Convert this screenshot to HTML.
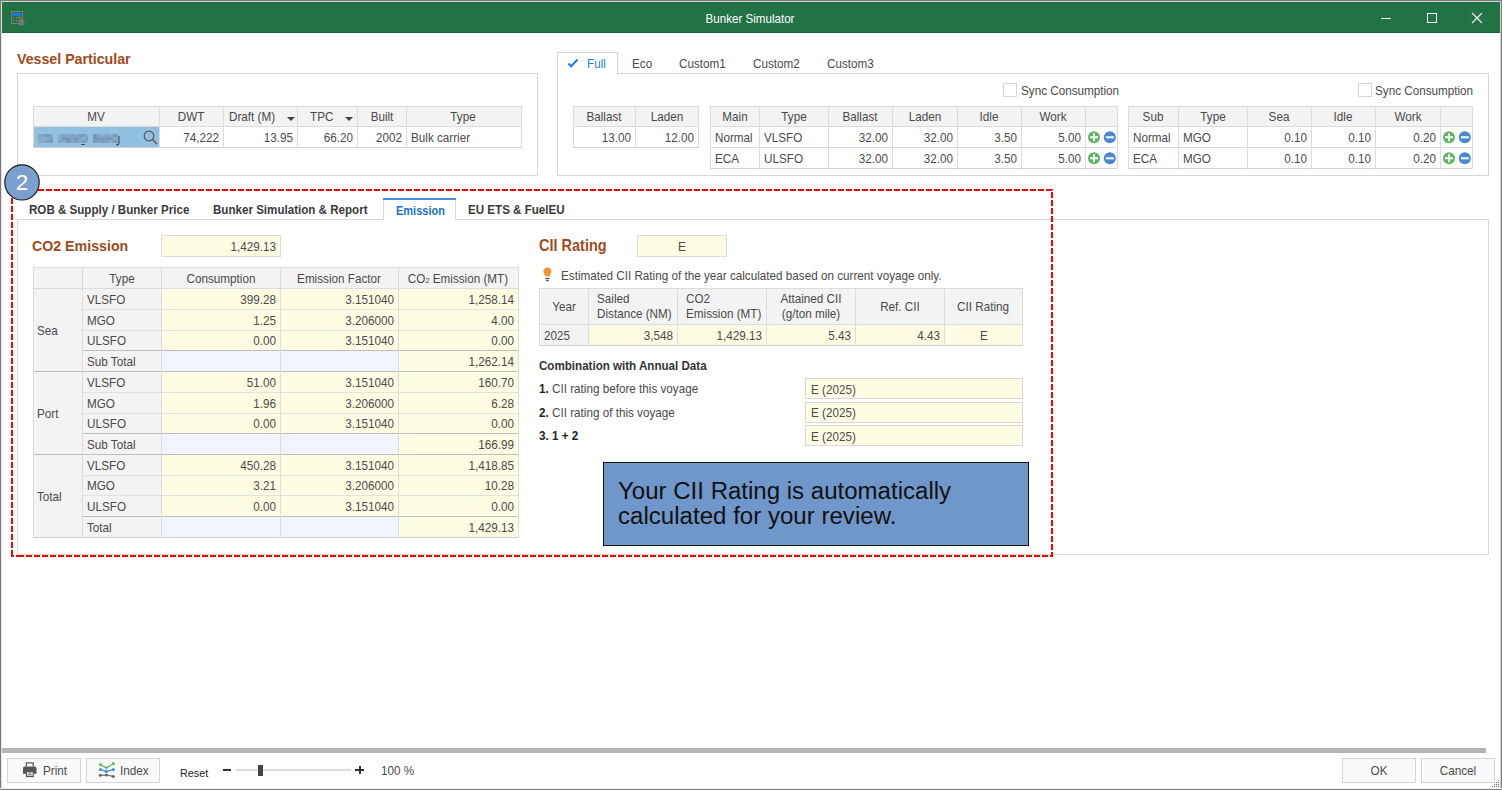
<!DOCTYPE html><html><head><meta charset="utf-8"><style>
html,body{margin:0;padding:0;}
body{width:1502px;height:790px;position:relative;overflow:hidden;background:#fff;font-family:"Liberation Sans",sans-serif;}
.r{position:absolute;box-sizing:content-box;}
.t{position:absolute;white-space:nowrap;line-height:normal;}
svg{position:absolute;}
</style></head><body>
<div class="r" style="left:0px;top:0px;width:1502px;height:790px;background:#fff;"></div>
<div class="r" style="left:0px;top:0px;width:1502px;height:1px;background:#7a7a7a;"></div>
<div class="r" style="left:0px;top:1px;width:1502px;height:1px;background:#d4d4d4;"></div>
<div class="r" style="left:0px;top:0px;width:1px;height:790px;background:#7a7a7a;"></div>
<div class="r" style="left:1px;top:1px;width:1px;height:788px;background:#e2e2e2;"></div>
<div class="r" style="left:1500px;top:1px;width:1px;height:788px;background:#d4d4d4;"></div>
<div class="r" style="left:1501px;top:0px;width:1px;height:790px;background:#7a7a7a;"></div>
<div class="r" style="left:0px;top:788px;width:1502px;height:1px;background:#f4f4f4;"></div>
<div class="r" style="left:0px;top:789px;width:1502px;height:1px;background:#7a7a7a;"></div>
<div class="r" style="left:2px;top:2px;width:1498px;height:31px;background:#217346;"></div>
<div class="r" style="left:2px;top:32px;width:1498px;height:1px;background:#176638;"></div>
<div class="t" style="top:11.76px;font-size:12.53px;color:#ffffff;left:450px;width:600px;text-align:center;transform-origin:50% 0;transform:scaleX(0.9259);">Bunker Simulator</div>
<svg style="left:8px;top:8px" width="20" height="20" viewBox="8 8 20 20">
<rect x="11.5" y="11.5" width="11" height="12" fill="none" stroke="#7a7a7a" stroke-width="1"/>
<rect x="13" y="13" width="8" height="3" fill="#1479ee"/>
<circle cx="13.8" cy="17.7" r="0.8" fill="#8a7a8a"/><circle cx="16.7" cy="17.7" r="0.8" fill="#8a7a8a"/><circle cx="19.5" cy="17.5" r="0.8" fill="#f0b020"/>
<circle cx="13.8" cy="20.6" r="0.8" fill="#8a7a8a"/><circle cx="16.7" cy="20.6" r="0.8" fill="#8a7a8a"/>
<path d="M21.3 17.8 C20.5 19 18 20.3 18 22.3 A3.3 3.3 0 0 0 24.6 22.3 C24.6 20.3 22.1 19 21.3 17.8Z" fill="#747474"/>
</svg>
<div class="r" style="left:1381px;top:18px;width:10px;height:1px;background:#fff;"></div>
<div class="r" style="left:1427px;top:13px;width:10px;height:10px;border:1px solid #fff;width:8px;height:8px;"></div>
<svg style="left:1471px;top:12px" width="12" height="12" viewBox="0 0 12 12"><path d="M1 1L11 11M11 1L1 11" stroke="#fff" stroke-width="1.1"/></svg>
<div class="t" style="top:50.02px;font-size:15.34px;font-weight:700;color:#a04b1d;left:17px;transform-origin:0 0;transform:scaleX(0.9259);">Vessel Particular</div>
<div class="r" style="left:17px;top:73px;width:521px;height:103px;border:1px solid #d6d6d6;width:519px;height:101px;"></div>
<div class="r" style="left:33px;top:106px;width:489px;height:21px;background:#f3f3f3;"></div>
<div class="r" style="left:34px;top:127px;width:125px;height:21px;background:#92c0e1;"></div>
<div class="r" style="left:33px;top:106px;width:489px;height:1px;background:#dcdcdc;"></div>
<div class="r" style="left:33px;top:126px;width:489px;height:1px;background:#dcdcdc;"></div>
<div class="r" style="left:33px;top:147px;width:489px;height:1px;background:#cfcfcf;"></div>
<div class="r" style="left:33px;top:106px;width:1px;height:42px;background:#dcdcdc;"></div>
<div class="r" style="left:159px;top:106px;width:1px;height:42px;background:#dcdcdc;"></div>
<div class="r" style="left:223px;top:106px;width:1px;height:42px;background:#dcdcdc;"></div>
<div class="r" style="left:297px;top:106px;width:1px;height:42px;background:#dcdcdc;"></div>
<div class="r" style="left:357px;top:106px;width:1px;height:42px;background:#dcdcdc;"></div>
<div class="r" style="left:406px;top:106px;width:1px;height:42px;background:#dcdcdc;"></div>
<div class="r" style="left:521px;top:106px;width:1px;height:42px;background:#dcdcdc;"></div>
<div class="t" style="top:109.96px;font-size:12.64px;color:#4a4a4a;left:-204px;width:600px;text-align:center;transform-origin:50% 0;transform:scaleX(0.9259);">MV</div>
<div class="t" style="top:109.96px;font-size:12.64px;color:#4a4a4a;left:-109px;width:600px;text-align:center;transform-origin:50% 0;transform:scaleX(0.9259);">DWT</div>
<div class="t" style="top:109.96px;font-size:12.64px;color:#4a4a4a;left:229px;transform-origin:0 0;transform:scaleX(0.9259);">Draft (M)</div>
<div class="t" style="top:109.96px;font-size:12.64px;color:#4a4a4a;left:310px;transform-origin:0 0;transform:scaleX(0.9259);">TPC</div>
<div class="t" style="top:109.96px;font-size:12.64px;color:#4a4a4a;left:82px;width:600px;text-align:center;transform-origin:50% 0;transform:scaleX(0.9259);">Built</div>
<div class="t" style="top:109.96px;font-size:12.64px;color:#4a4a4a;left:163px;width:600px;text-align:center;transform-origin:50% 0;transform:scaleX(0.9259);">Type</div>
<svg style="left:287px;top:117px" width="8" height="4" viewBox="0 0 8 4"><path d="M0 0H8L4 4Z" fill="#444"/></svg>
<svg style="left:345px;top:117px" width="8" height="4" viewBox="0 0 8 4"><path d="M0 0H8L4 4Z" fill="#444"/></svg>
<div class="t" style="top:130.96px;font-size:12.64px;color:#4a4a4a;left:-181px;width:400px;text-align:right;transform-origin:100% 0;transform:scaleX(0.9259);">74,222</div>
<div class="t" style="top:130.96px;font-size:12.64px;color:#4a4a4a;left:-107px;width:400px;text-align:right;transform-origin:100% 0;transform:scaleX(0.9259);">13.95</div>
<div class="t" style="top:130.96px;font-size:12.64px;color:#4a4a4a;left:-47px;width:400px;text-align:right;transform-origin:100% 0;transform:scaleX(0.9259);">66.20</div>
<div class="t" style="top:130.96px;font-size:12.64px;color:#4a4a4a;left:2px;width:400px;text-align:right;transform-origin:100% 0;transform:scaleX(0.9259);">2002</div>
<div class="t" style="top:130.96px;font-size:12.64px;color:#4a4a4a;left:411px;transform-origin:0 0;transform:scaleX(0.9259);">Bulk carrier</div>
<div class="r" style="left:38px;top:134px;width:15px;height:9px;background:#84a8c6;"></div>
<div class="r" style="left:38px;top:134px;width:4px;height:3px;background:#80a4c3;"></div>
<div class="r" style="left:38px;top:137px;width:4px;height:3px;background:#86aac8;"></div>
<div class="r" style="left:38px;top:140px;width:4px;height:3px;background:#86aac8;"></div>
<div class="r" style="left:42px;top:134px;width:4px;height:3px;background:#80a4c3;"></div>
<div class="r" style="left:42px;top:137px;width:4px;height:3px;background:#8aaecb;"></div>
<div class="r" style="left:42px;top:140px;width:4px;height:3px;background:#86aac8;"></div>
<div class="r" style="left:46px;top:134px;width:4px;height:3px;background:#769bba;"></div>
<div class="r" style="left:46px;top:137px;width:4px;height:3px;background:#86aac8;"></div>
<div class="r" style="left:46px;top:140px;width:4px;height:3px;background:#7a9fbe;"></div>
<div class="r" style="left:50px;top:134px;width:3px;height:3px;background:#86aac8;"></div>
<div class="r" style="left:50px;top:137px;width:3px;height:3px;background:#7a9fbe;"></div>
<div class="r" style="left:50px;top:140px;width:3px;height:3px;background:#769bba;"></div>
<div class="r" style="left:58px;top:134px;width:30px;height:9px;background:#84a8c6;"></div>
<div class="r" style="left:58px;top:134px;width:4px;height:3px;background:#8aaecb;"></div>
<div class="r" style="left:58px;top:137px;width:4px;height:3px;background:#86aac8;"></div>
<div class="r" style="left:58px;top:140px;width:4px;height:3px;background:#80a4c3;"></div>
<div class="r" style="left:62px;top:134px;width:4px;height:3px;background:#80a4c3;"></div>
<div class="r" style="left:62px;top:137px;width:4px;height:3px;background:#769bba;"></div>
<div class="r" style="left:62px;top:140px;width:4px;height:3px;background:#86aac8;"></div>
<div class="r" style="left:66px;top:134px;width:4px;height:3px;background:#86aac8;"></div>
<div class="r" style="left:66px;top:137px;width:4px;height:3px;background:#769bba;"></div>
<div class="r" style="left:66px;top:140px;width:4px;height:3px;background:#769bba;"></div>
<div class="r" style="left:70px;top:134px;width:4px;height:3px;background:#80a4c3;"></div>
<div class="r" style="left:70px;top:137px;width:4px;height:3px;background:#80a4c3;"></div>
<div class="r" style="left:70px;top:140px;width:4px;height:3px;background:#80a4c3;"></div>
<div class="r" style="left:74px;top:134px;width:4px;height:3px;background:#86aac8;"></div>
<div class="r" style="left:74px;top:137px;width:4px;height:3px;background:#769bba;"></div>
<div class="r" style="left:74px;top:140px;width:4px;height:3px;background:#7a9fbe;"></div>
<div class="r" style="left:78px;top:134px;width:4px;height:3px;background:#7a9fbe;"></div>
<div class="r" style="left:78px;top:137px;width:4px;height:3px;background:#80a4c3;"></div>
<div class="r" style="left:78px;top:140px;width:4px;height:3px;background:#86aac8;"></div>
<div class="r" style="left:82px;top:134px;width:4px;height:3px;background:#7a9fbe;"></div>
<div class="r" style="left:82px;top:137px;width:4px;height:3px;background:#8aaecb;"></div>
<div class="r" style="left:82px;top:140px;width:4px;height:3px;background:#7a9fbe;"></div>
<div class="r" style="left:86px;top:134px;width:2px;height:3px;background:#8aaecb;"></div>
<div class="r" style="left:86px;top:137px;width:2px;height:3px;background:#769bba;"></div>
<div class="r" style="left:86px;top:140px;width:2px;height:3px;background:#86aac8;"></div>
<div class="r" style="left:93px;top:134px;width:26px;height:9px;background:#84a8c6;"></div>
<div class="r" style="left:93px;top:134px;width:4px;height:3px;background:#769bba;"></div>
<div class="r" style="left:93px;top:137px;width:4px;height:3px;background:#769bba;"></div>
<div class="r" style="left:93px;top:140px;width:4px;height:3px;background:#769bba;"></div>
<div class="r" style="left:97px;top:134px;width:4px;height:3px;background:#86aac8;"></div>
<div class="r" style="left:97px;top:137px;width:4px;height:3px;background:#769bba;"></div>
<div class="r" style="left:97px;top:140px;width:4px;height:3px;background:#80a4c3;"></div>
<div class="r" style="left:101px;top:134px;width:4px;height:3px;background:#8aaecb;"></div>
<div class="r" style="left:101px;top:137px;width:4px;height:3px;background:#7a9fbe;"></div>
<div class="r" style="left:101px;top:140px;width:4px;height:3px;background:#7a9fbe;"></div>
<div class="r" style="left:105px;top:134px;width:4px;height:3px;background:#80a4c3;"></div>
<div class="r" style="left:105px;top:137px;width:4px;height:3px;background:#769bba;"></div>
<div class="r" style="left:105px;top:140px;width:4px;height:3px;background:#80a4c3;"></div>
<div class="r" style="left:109px;top:134px;width:4px;height:3px;background:#8aaecb;"></div>
<div class="r" style="left:109px;top:137px;width:4px;height:3px;background:#769bba;"></div>
<div class="r" style="left:109px;top:140px;width:4px;height:3px;background:#8aaecb;"></div>
<div class="r" style="left:113px;top:134px;width:4px;height:3px;background:#769bba;"></div>
<div class="r" style="left:113px;top:137px;width:4px;height:3px;background:#86aac8;"></div>
<div class="r" style="left:113px;top:140px;width:4px;height:3px;background:#769bba;"></div>
<div class="r" style="left:117px;top:134px;width:2px;height:3px;background:#86aac8;"></div>
<div class="r" style="left:117px;top:137px;width:2px;height:3px;background:#8aaecb;"></div>
<div class="r" style="left:117px;top:140px;width:2px;height:3px;background:#86aac8;"></div>
<div class="r" style="left:81px;top:144px;width:4px;height:1px;background:#3d5060;"></div>
<svg style="left:114px;top:135px" width="8" height="12" viewBox="0 0 8 12"><path d="M5 1V8Q5 10 2 10" fill="none" stroke="#3d4e5c" stroke-width="1.1"/></svg>
<svg style="left:143px;top:130px" width="15" height="15" viewBox="0 0 15 15"><circle cx="6" cy="6" r="4.8" fill="none" stroke="#555" stroke-width="1.2"/><path d="M9.5 9.5L14 14" stroke="#555" stroke-width="1.3"/></svg>
<div class="r" style="left:557px;top:73px;width:932px;height:103px;border:1px solid #d6d6d6;width:930px;height:101px;"></div>
<div class="r" style="left:557px;top:52px;width:61px;height:23px;border:1px solid #d6d6d6;width:59px;height:21px;border-bottom:none;height:22px;background:#fff;"></div>
<svg style="left:567px;top:58px" width="12" height="10" viewBox="0 0 12 10"><path d="M1.5 5.5L4.2 8.2L10.5 1.5" fill="none" stroke="#1e7ad6" stroke-width="2"/></svg>
<div class="t" style="top:57.16px;font-size:12.64px;color:#2a7fd4;left:587px;transform-origin:0 0;transform:scaleX(0.9259);">Full</div>
<div class="t" style="top:57.16px;font-size:12.64px;color:#4a4a4a;left:632px;transform-origin:0 0;transform:scaleX(0.9259);">Eco</div>
<div class="t" style="top:57.16px;font-size:12.64px;color:#4a4a4a;left:679px;transform-origin:0 0;transform:scaleX(0.9259);">Custom1</div>
<div class="t" style="top:57.16px;font-size:12.64px;color:#4a4a4a;left:753px;transform-origin:0 0;transform:scaleX(0.9259);">Custom2</div>
<div class="t" style="top:57.16px;font-size:12.64px;color:#4a4a4a;left:827px;transform-origin:0 0;transform:scaleX(0.9259);">Custom3</div>
<div class="r" style="left:1003px;top:83px;width:14px;height:14px;border:1px solid #d6d6d6;width:12px;height:12px;"></div>
<div class="t" style="top:83.96px;font-size:12.64px;color:#4a4a4a;left:1021px;transform-origin:0 0;transform:scaleX(0.9259);">Sync Consumption</div>
<div class="r" style="left:1358px;top:83px;width:14px;height:14px;border:1px solid #d6d6d6;width:12px;height:12px;"></div>
<div class="t" style="top:83.96px;font-size:12.64px;color:#4a4a4a;left:1375px;transform-origin:0 0;transform:scaleX(0.9259);">Sync Consumption</div>
<div class="r" style="left:573px;top:106px;width:126px;height:21px;background:#f3f3f3;"></div>
<div class="r" style="left:573px;top:106px;width:126px;height:1px;background:#dcdcdc;"></div>
<div class="r" style="left:573px;top:126px;width:126px;height:1px;background:#dcdcdc;"></div>
<div class="r" style="left:573px;top:147px;width:126px;height:1px;background:#cfcfcf;"></div>
<div class="r" style="left:573px;top:106px;width:1px;height:42px;background:#dcdcdc;"></div>
<div class="r" style="left:635px;top:106px;width:1px;height:42px;background:#dcdcdc;"></div>
<div class="r" style="left:698px;top:106px;width:1px;height:42px;background:#dcdcdc;"></div>
<div class="t" style="top:109.96px;font-size:12.64px;color:#4a4a4a;left:304px;width:600px;text-align:center;transform-origin:50% 0;transform:scaleX(0.9259);">Ballast</div>
<div class="t" style="top:109.96px;font-size:12.64px;color:#4a4a4a;left:367px;width:600px;text-align:center;transform-origin:50% 0;transform:scaleX(0.9259);">Laden</div>
<div class="t" style="top:130.96px;font-size:12.64px;color:#4a4a4a;left:231px;width:400px;text-align:right;transform-origin:100% 0;transform:scaleX(0.9259);">13.00</div>
<div class="t" style="top:130.96px;font-size:12.64px;color:#4a4a4a;left:294px;width:400px;text-align:right;transform-origin:100% 0;transform:scaleX(0.9259);">12.00</div>
<div class="r" style="left:710px;top:106px;width:408px;height:21px;background:#f3f3f3;"></div>
<div class="r" style="left:710px;top:106px;width:408px;height:1px;background:#dcdcdc;"></div>
<div class="r" style="left:710px;top:126px;width:408px;height:1px;background:#dcdcdc;"></div>
<div class="r" style="left:710px;top:147px;width:408px;height:1px;background:#dcdcdc;"></div>
<div class="r" style="left:710px;top:168px;width:408px;height:1px;background:#cfcfcf;"></div>
<div class="r" style="left:710px;top:106px;width:1px;height:63px;background:#dcdcdc;"></div>
<div class="r" style="left:759px;top:106px;width:1px;height:63px;background:#dcdcdc;"></div>
<div class="r" style="left:828px;top:106px;width:1px;height:63px;background:#dcdcdc;"></div>
<div class="r" style="left:892px;top:106px;width:1px;height:63px;background:#dcdcdc;"></div>
<div class="r" style="left:957px;top:106px;width:1px;height:63px;background:#dcdcdc;"></div>
<div class="r" style="left:1021px;top:106px;width:1px;height:63px;background:#dcdcdc;"></div>
<div class="r" style="left:1085px;top:106px;width:1px;height:63px;background:#dcdcdc;"></div>
<div class="r" style="left:1117px;top:106px;width:1px;height:63px;background:#dcdcdc;"></div>
<div class="t" style="top:109.96px;font-size:12.64px;color:#4a4a4a;left:434.5px;width:600px;text-align:center;transform-origin:50% 0;transform:scaleX(0.9259);">Main</div>
<div class="t" style="top:109.96px;font-size:12.64px;color:#4a4a4a;left:493.5px;width:600px;text-align:center;transform-origin:50% 0;transform:scaleX(0.9259);">Type</div>
<div class="t" style="top:109.96px;font-size:12.64px;color:#4a4a4a;left:560.0px;width:600px;text-align:center;transform-origin:50% 0;transform:scaleX(0.9259);">Ballast</div>
<div class="t" style="top:109.96px;font-size:12.64px;color:#4a4a4a;left:624.5px;width:600px;text-align:center;transform-origin:50% 0;transform:scaleX(0.9259);">Laden</div>
<div class="t" style="top:109.96px;font-size:12.64px;color:#4a4a4a;left:689.0px;width:600px;text-align:center;transform-origin:50% 0;transform:scaleX(0.9259);">Idle</div>
<div class="t" style="top:109.96px;font-size:12.64px;color:#4a4a4a;left:753.0px;width:600px;text-align:center;transform-origin:50% 0;transform:scaleX(0.9259);">Work</div>
<div class="t" style="top:130.96px;font-size:12.64px;color:#4a4a4a;left:715px;transform-origin:0 0;transform:scaleX(0.9259);">Normal</div>
<div class="t" style="top:130.96px;font-size:12.64px;color:#4a4a4a;left:764px;transform-origin:0 0;transform:scaleX(0.9259);">VLSFO</div>
<div class="t" style="top:130.96px;font-size:12.64px;color:#4a4a4a;left:488px;width:400px;text-align:right;transform-origin:100% 0;transform:scaleX(0.9259);">32.00</div>
<div class="t" style="top:130.96px;font-size:12.64px;color:#4a4a4a;left:553px;width:400px;text-align:right;transform-origin:100% 0;transform:scaleX(0.9259);">32.00</div>
<div class="t" style="top:130.96px;font-size:12.64px;color:#4a4a4a;left:617px;width:400px;text-align:right;transform-origin:100% 0;transform:scaleX(0.9259);">3.50</div>
<div class="t" style="top:130.96px;font-size:12.64px;color:#4a4a4a;left:681px;width:400px;text-align:right;transform-origin:100% 0;transform:scaleX(0.9259);">5.00</div>
<svg style="left:1088px;top:131px" width="30" height="13" viewBox="0 0 30 13">
<circle cx="6" cy="6.3" r="6" fill="#5cb860"/><path d="M6 2.3V10.3M2 6.3H10" stroke="#fff" stroke-width="2"/>
<circle cx="21.8" cy="6.3" r="6" fill="#4a88cf"/><path d="M17.8 6.3H25.8" stroke="#fff" stroke-width="2"/></svg>
<div class="t" style="top:151.96px;font-size:12.64px;color:#4a4a4a;left:715px;transform-origin:0 0;transform:scaleX(0.9259);">ECA</div>
<div class="t" style="top:151.96px;font-size:12.64px;color:#4a4a4a;left:764px;transform-origin:0 0;transform:scaleX(0.9259);">ULSFO</div>
<div class="t" style="top:151.96px;font-size:12.64px;color:#4a4a4a;left:488px;width:400px;text-align:right;transform-origin:100% 0;transform:scaleX(0.9259);">32.00</div>
<div class="t" style="top:151.96px;font-size:12.64px;color:#4a4a4a;left:553px;width:400px;text-align:right;transform-origin:100% 0;transform:scaleX(0.9259);">32.00</div>
<div class="t" style="top:151.96px;font-size:12.64px;color:#4a4a4a;left:617px;width:400px;text-align:right;transform-origin:100% 0;transform:scaleX(0.9259);">3.50</div>
<div class="t" style="top:151.96px;font-size:12.64px;color:#4a4a4a;left:681px;width:400px;text-align:right;transform-origin:100% 0;transform:scaleX(0.9259);">5.00</div>
<svg style="left:1088px;top:152px" width="30" height="13" viewBox="0 0 30 13">
<circle cx="6" cy="6.3" r="6" fill="#5cb860"/><path d="M6 2.3V10.3M2 6.3H10" stroke="#fff" stroke-width="2"/>
<circle cx="21.8" cy="6.3" r="6" fill="#4a88cf"/><path d="M17.8 6.3H25.8" stroke="#fff" stroke-width="2"/></svg>
<div class="r" style="left:1128px;top:106px;width:345px;height:21px;background:#f3f3f3;"></div>
<div class="r" style="left:1128px;top:106px;width:345px;height:1px;background:#dcdcdc;"></div>
<div class="r" style="left:1128px;top:126px;width:345px;height:1px;background:#dcdcdc;"></div>
<div class="r" style="left:1128px;top:147px;width:345px;height:1px;background:#dcdcdc;"></div>
<div class="r" style="left:1128px;top:168px;width:345px;height:1px;background:#cfcfcf;"></div>
<div class="r" style="left:1128px;top:106px;width:1px;height:63px;background:#dcdcdc;"></div>
<div class="r" style="left:1178px;top:106px;width:1px;height:63px;background:#dcdcdc;"></div>
<div class="r" style="left:1247px;top:106px;width:1px;height:63px;background:#dcdcdc;"></div>
<div class="r" style="left:1311px;top:106px;width:1px;height:63px;background:#dcdcdc;"></div>
<div class="r" style="left:1375px;top:106px;width:1px;height:63px;background:#dcdcdc;"></div>
<div class="r" style="left:1440px;top:106px;width:1px;height:63px;background:#dcdcdc;"></div>
<div class="r" style="left:1472px;top:106px;width:1px;height:63px;background:#dcdcdc;"></div>
<div class="t" style="top:109.96px;font-size:12.64px;color:#4a4a4a;left:853.0px;width:600px;text-align:center;transform-origin:50% 0;transform:scaleX(0.9259);">Sub</div>
<div class="t" style="top:109.96px;font-size:12.64px;color:#4a4a4a;left:912.5px;width:600px;text-align:center;transform-origin:50% 0;transform:scaleX(0.9259);">Type</div>
<div class="t" style="top:109.96px;font-size:12.64px;color:#4a4a4a;left:979.0px;width:600px;text-align:center;transform-origin:50% 0;transform:scaleX(0.9259);">Sea</div>
<div class="t" style="top:109.96px;font-size:12.64px;color:#4a4a4a;left:1043.0px;width:600px;text-align:center;transform-origin:50% 0;transform:scaleX(0.9259);">Idle</div>
<div class="t" style="top:109.96px;font-size:12.64px;color:#4a4a4a;left:1107.5px;width:600px;text-align:center;transform-origin:50% 0;transform:scaleX(0.9259);">Work</div>
<div class="t" style="top:130.96px;font-size:12.64px;color:#4a4a4a;left:1133px;transform-origin:0 0;transform:scaleX(0.9259);">Normal</div>
<div class="t" style="top:130.96px;font-size:12.64px;color:#4a4a4a;left:1183px;transform-origin:0 0;transform:scaleX(0.9259);">MGO</div>
<div class="t" style="top:130.96px;font-size:12.64px;color:#4a4a4a;left:907px;width:400px;text-align:right;transform-origin:100% 0;transform:scaleX(0.9259);">0.10</div>
<div class="t" style="top:130.96px;font-size:12.64px;color:#4a4a4a;left:971px;width:400px;text-align:right;transform-origin:100% 0;transform:scaleX(0.9259);">0.10</div>
<div class="t" style="top:130.96px;font-size:12.64px;color:#4a4a4a;left:1036px;width:400px;text-align:right;transform-origin:100% 0;transform:scaleX(0.9259);">0.20</div>
<svg style="left:1443px;top:131px" width="30" height="13" viewBox="0 0 30 13">
<circle cx="6" cy="6.3" r="6" fill="#5cb860"/><path d="M6 2.3V10.3M2 6.3H10" stroke="#fff" stroke-width="2"/>
<circle cx="21.8" cy="6.3" r="6" fill="#4a88cf"/><path d="M17.8 6.3H25.8" stroke="#fff" stroke-width="2"/></svg>
<div class="t" style="top:151.96px;font-size:12.64px;color:#4a4a4a;left:1133px;transform-origin:0 0;transform:scaleX(0.9259);">ECA</div>
<div class="t" style="top:151.96px;font-size:12.64px;color:#4a4a4a;left:1183px;transform-origin:0 0;transform:scaleX(0.9259);">MGO</div>
<div class="t" style="top:151.96px;font-size:12.64px;color:#4a4a4a;left:907px;width:400px;text-align:right;transform-origin:100% 0;transform:scaleX(0.9259);">0.10</div>
<div class="t" style="top:151.96px;font-size:12.64px;color:#4a4a4a;left:971px;width:400px;text-align:right;transform-origin:100% 0;transform:scaleX(0.9259);">0.10</div>
<div class="t" style="top:151.96px;font-size:12.64px;color:#4a4a4a;left:1036px;width:400px;text-align:right;transform-origin:100% 0;transform:scaleX(0.9259);">0.20</div>
<svg style="left:1443px;top:152px" width="30" height="13" viewBox="0 0 30 13">
<circle cx="6" cy="6.3" r="6" fill="#5cb860"/><path d="M6 2.3V10.3M2 6.3H10" stroke="#fff" stroke-width="2"/>
<circle cx="21.8" cy="6.3" r="6" fill="#4a88cf"/><path d="M17.8 6.3H25.8" stroke="#fff" stroke-width="2"/></svg>
<div class="r" style="left:17px;top:219px;width:1472px;height:336px;border:1px solid #d9d9d9;width:1470px;height:334px;"></div>
<div class="t" style="top:203.06px;font-size:12.53px;font-weight:700;color:#3a3a3a;left:29px;transform-origin:0 0;transform:scaleX(0.9259);">ROB &amp; Supply / Bunker Price</div>
<div class="t" style="top:203.06px;font-size:12.53px;font-weight:700;color:#3a3a3a;left:213px;transform-origin:0 0;transform:scaleX(0.9259);">Bunker Simulation &amp; Report</div>
<div class="r" style="left:383px;top:198px;width:73px;height:22px;background:#fff;border-left:1px solid #d9d9d9;border-right:1px solid #d9d9d9;width:71px;"></div>
<div class="r" style="left:383px;top:198px;width:73px;height:2px;background:#4d8ae6;"></div>
<div class="t" style="top:203.65px;font-size:11.88px;font-weight:700;color:#1a72c6;left:396px;transform-origin:0 0;transform:scaleX(0.9259);">Emission</div>
<div class="t" style="top:203.06px;font-size:12.53px;font-weight:700;color:#3a3a3a;left:467.5px;transform-origin:0 0;transform:scaleX(0.9259);">EU ETS &amp; FuelEU</div>
<div class="t" style="top:236.72px;font-size:15.34px;font-weight:700;color:#a04b1d;left:32px;transform-origin:0 0;transform:scaleX(0.9259);">CO2 Emission</div>
<div class="r" style="left:161px;top:235px;width:120px;height:22px;background:#fefde4;border:1px solid #dcdcdc;width:118px;height:20px;"></div>
<div class="t" style="top:239.96px;font-size:12.64px;color:#4a4a4a;left:-124px;width:400px;text-align:right;transform-origin:100% 0;transform:scaleX(0.9259);">1,429.13</div>
<div class="r" style="left:33px;top:267px;width:485px;height:21px;background:#f3f3f3;"></div>
<div class="r" style="left:33px;top:288px;width:128px;height:249px;background:#f3f3f3;"></div>
<div class="r" style="left:161px;top:288px;width:357px;height:62px;background:#fefde4;"></div>
<div class="r" style="left:161px;top:350px;width:237px;height:21px;background:#f1f4fd;"></div>
<div class="r" style="left:398px;top:350px;width:120px;height:21px;background:#fefde4;"></div>
<div class="r" style="left:161px;top:371px;width:357px;height:62px;background:#fefde4;"></div>
<div class="r" style="left:161px;top:433px;width:237px;height:21px;background:#f1f4fd;"></div>
<div class="r" style="left:398px;top:433px;width:120px;height:21px;background:#fefde4;"></div>
<div class="r" style="left:161px;top:454px;width:357px;height:62px;background:#fefde4;"></div>
<div class="r" style="left:161px;top:516px;width:237px;height:21px;background:#f1f4fd;"></div>
<div class="r" style="left:398px;top:516px;width:120px;height:21px;background:#fefde4;"></div>
<div class="r" style="left:33px;top:267px;width:486px;height:1px;background:#dcdcdc;"></div>
<div class="r" style="left:33px;top:288px;width:486px;height:1px;background:#dcdcdc;"></div>
<div class="r" style="left:82px;top:309px;width:437px;height:1px;background:#e2e2e2;"></div>
<div class="r" style="left:82px;top:330px;width:437px;height:1px;background:#e2e2e2;"></div>
<div class="r" style="left:82px;top:350px;width:437px;height:1px;background:#bdbdbd;"></div>
<div class="r" style="left:33px;top:371px;width:486px;height:1px;background:#bdbdbd;"></div>
<div class="r" style="left:82px;top:392px;width:437px;height:1px;background:#e2e2e2;"></div>
<div class="r" style="left:82px;top:413px;width:437px;height:1px;background:#e2e2e2;"></div>
<div class="r" style="left:82px;top:433px;width:437px;height:1px;background:#bdbdbd;"></div>
<div class="r" style="left:33px;top:454px;width:486px;height:1px;background:#bdbdbd;"></div>
<div class="r" style="left:82px;top:475px;width:437px;height:1px;background:#e2e2e2;"></div>
<div class="r" style="left:82px;top:495px;width:437px;height:1px;background:#e2e2e2;"></div>
<div class="r" style="left:82px;top:516px;width:437px;height:1px;background:#bdbdbd;"></div>
<div class="r" style="left:33px;top:537px;width:486px;height:1px;background:#cfcfcf;"></div>
<div class="r" style="left:33px;top:267px;width:1px;height:271px;background:#dcdcdc;"></div>
<div class="r" style="left:82px;top:267px;width:1px;height:271px;background:#dcdcdc;"></div>
<div class="r" style="left:161px;top:267px;width:1px;height:271px;background:#dcdcdc;"></div>
<div class="r" style="left:280px;top:267px;width:1px;height:271px;background:#dcdcdc;"></div>
<div class="r" style="left:398px;top:267px;width:1px;height:271px;background:#dcdcdc;"></div>
<div class="r" style="left:518px;top:267px;width:1px;height:271px;background:#dcdcdc;"></div>
<div class="t" style="top:270.96px;font-size:12.64px;color:#444;left:-242.5px;width:600px;text-align:center;transform-origin:50% 0;transform:scaleX(0.9259);"></div>
<div class="t" style="top:271.66px;font-size:12.64px;color:#4a4a4a;left:-178.5px;width:600px;text-align:center;transform-origin:50% 0;transform:scaleX(0.9259);">Type</div>
<div class="t" style="top:271.66px;font-size:12.64px;color:#4a4a4a;left:-79.5px;width:600px;text-align:center;transform-origin:50% 0;transform:scaleX(0.9259);">Consumption</div>
<div class="t" style="top:271.66px;font-size:12.64px;color:#4a4a4a;left:39px;width:600px;text-align:center;transform-origin:50% 0;transform:scaleX(0.9259);">Emission Factor</div>
<div class="t" style="top:271.66px;font-size:12.64px;color:#4a4a4a;left:158px;width:600px;text-align:center;transform-origin:50% 0;transform:scaleX(0.9259);">CO<span style="font-size:8px">2</span> Emission (MT)</div>
<div class="t" style="top:323.76px;font-size:12.64px;color:#4a4a4a;left:37px;transform-origin:0 0;transform:scaleX(0.9259);">Sea</div>
<div class="t" style="top:293.06px;font-size:12.64px;color:#4a4a4a;left:87px;transform-origin:0 0;transform:scaleX(0.9259);">VLSFO</div>
<div class="t" style="top:293.06px;font-size:12.64px;color:#4a4a4a;left:-124px;width:400px;text-align:right;transform-origin:100% 0;transform:scaleX(0.9259);">399.28</div>
<div class="t" style="top:293.06px;font-size:12.64px;color:#4a4a4a;left:-6px;width:400px;text-align:right;transform-origin:100% 0;transform:scaleX(0.9259);">3.151040</div>
<div class="t" style="top:293.06px;font-size:12.64px;color:#4a4a4a;left:114px;width:400px;text-align:right;transform-origin:100% 0;transform:scaleX(0.9259);">1,258.14</div>
<div class="t" style="top:314.06px;font-size:12.64px;color:#4a4a4a;left:87px;transform-origin:0 0;transform:scaleX(0.9259);">MGO</div>
<div class="t" style="top:314.06px;font-size:12.64px;color:#4a4a4a;left:-124px;width:400px;text-align:right;transform-origin:100% 0;transform:scaleX(0.9259);">1.25</div>
<div class="t" style="top:314.06px;font-size:12.64px;color:#4a4a4a;left:-6px;width:400px;text-align:right;transform-origin:100% 0;transform:scaleX(0.9259);">3.206000</div>
<div class="t" style="top:314.06px;font-size:12.64px;color:#4a4a4a;left:114px;width:400px;text-align:right;transform-origin:100% 0;transform:scaleX(0.9259);">4.00</div>
<div class="t" style="top:334.06px;font-size:12.64px;color:#4a4a4a;left:87px;transform-origin:0 0;transform:scaleX(0.9259);">ULSFO</div>
<div class="t" style="top:334.06px;font-size:12.64px;color:#4a4a4a;left:-124px;width:400px;text-align:right;transform-origin:100% 0;transform:scaleX(0.9259);">0.00</div>
<div class="t" style="top:334.06px;font-size:12.64px;color:#4a4a4a;left:-6px;width:400px;text-align:right;transform-origin:100% 0;transform:scaleX(0.9259);">3.151040</div>
<div class="t" style="top:334.06px;font-size:12.64px;color:#4a4a4a;left:114px;width:400px;text-align:right;transform-origin:100% 0;transform:scaleX(0.9259);">0.00</div>
<div class="t" style="top:355.06px;font-size:12.64px;color:#4a4a4a;left:87px;transform-origin:0 0;transform:scaleX(0.9259);">Sub Total</div>
<div class="t" style="top:355.06px;font-size:12.64px;color:#4a4a4a;left:114px;width:400px;text-align:right;transform-origin:100% 0;transform:scaleX(0.9259);">1,262.14</div>
<div class="t" style="top:406.76px;font-size:12.64px;color:#4a4a4a;left:37px;transform-origin:0 0;transform:scaleX(0.9259);">Port</div>
<div class="t" style="top:376.06px;font-size:12.64px;color:#4a4a4a;left:87px;transform-origin:0 0;transform:scaleX(0.9259);">VLSFO</div>
<div class="t" style="top:376.06px;font-size:12.64px;color:#4a4a4a;left:-124px;width:400px;text-align:right;transform-origin:100% 0;transform:scaleX(0.9259);">51.00</div>
<div class="t" style="top:376.06px;font-size:12.64px;color:#4a4a4a;left:-6px;width:400px;text-align:right;transform-origin:100% 0;transform:scaleX(0.9259);">3.151040</div>
<div class="t" style="top:376.06px;font-size:12.64px;color:#4a4a4a;left:114px;width:400px;text-align:right;transform-origin:100% 0;transform:scaleX(0.9259);">160.70</div>
<div class="t" style="top:397.06px;font-size:12.64px;color:#4a4a4a;left:87px;transform-origin:0 0;transform:scaleX(0.9259);">MGO</div>
<div class="t" style="top:397.06px;font-size:12.64px;color:#4a4a4a;left:-124px;width:400px;text-align:right;transform-origin:100% 0;transform:scaleX(0.9259);">1.96</div>
<div class="t" style="top:397.06px;font-size:12.64px;color:#4a4a4a;left:-6px;width:400px;text-align:right;transform-origin:100% 0;transform:scaleX(0.9259);">3.206000</div>
<div class="t" style="top:397.06px;font-size:12.64px;color:#4a4a4a;left:114px;width:400px;text-align:right;transform-origin:100% 0;transform:scaleX(0.9259);">6.28</div>
<div class="t" style="top:417.06px;font-size:12.64px;color:#4a4a4a;left:87px;transform-origin:0 0;transform:scaleX(0.9259);">ULSFO</div>
<div class="t" style="top:417.06px;font-size:12.64px;color:#4a4a4a;left:-124px;width:400px;text-align:right;transform-origin:100% 0;transform:scaleX(0.9259);">0.00</div>
<div class="t" style="top:417.06px;font-size:12.64px;color:#4a4a4a;left:-6px;width:400px;text-align:right;transform-origin:100% 0;transform:scaleX(0.9259);">3.151040</div>
<div class="t" style="top:417.06px;font-size:12.64px;color:#4a4a4a;left:114px;width:400px;text-align:right;transform-origin:100% 0;transform:scaleX(0.9259);">0.00</div>
<div class="t" style="top:438.06px;font-size:12.64px;color:#4a4a4a;left:87px;transform-origin:0 0;transform:scaleX(0.9259);">Sub Total</div>
<div class="t" style="top:438.06px;font-size:12.64px;color:#4a4a4a;left:114px;width:400px;text-align:right;transform-origin:100% 0;transform:scaleX(0.9259);">166.99</div>
<div class="t" style="top:489.76px;font-size:12.64px;color:#4a4a4a;left:37px;transform-origin:0 0;transform:scaleX(0.9259);">Total</div>
<div class="t" style="top:459.06px;font-size:12.64px;color:#4a4a4a;left:87px;transform-origin:0 0;transform:scaleX(0.9259);">VLSFO</div>
<div class="t" style="top:459.06px;font-size:12.64px;color:#4a4a4a;left:-124px;width:400px;text-align:right;transform-origin:100% 0;transform:scaleX(0.9259);">450.28</div>
<div class="t" style="top:459.06px;font-size:12.64px;color:#4a4a4a;left:-6px;width:400px;text-align:right;transform-origin:100% 0;transform:scaleX(0.9259);">3.151040</div>
<div class="t" style="top:459.06px;font-size:12.64px;color:#4a4a4a;left:114px;width:400px;text-align:right;transform-origin:100% 0;transform:scaleX(0.9259);">1,418.85</div>
<div class="t" style="top:479.06px;font-size:12.64px;color:#4a4a4a;left:87px;transform-origin:0 0;transform:scaleX(0.9259);">MGO</div>
<div class="t" style="top:479.06px;font-size:12.64px;color:#4a4a4a;left:-124px;width:400px;text-align:right;transform-origin:100% 0;transform:scaleX(0.9259);">3.21</div>
<div class="t" style="top:479.06px;font-size:12.64px;color:#4a4a4a;left:-6px;width:400px;text-align:right;transform-origin:100% 0;transform:scaleX(0.9259);">3.206000</div>
<div class="t" style="top:479.06px;font-size:12.64px;color:#4a4a4a;left:114px;width:400px;text-align:right;transform-origin:100% 0;transform:scaleX(0.9259);">10.28</div>
<div class="t" style="top:500.06px;font-size:12.64px;color:#4a4a4a;left:87px;transform-origin:0 0;transform:scaleX(0.9259);">ULSFO</div>
<div class="t" style="top:500.06px;font-size:12.64px;color:#4a4a4a;left:-124px;width:400px;text-align:right;transform-origin:100% 0;transform:scaleX(0.9259);">0.00</div>
<div class="t" style="top:500.06px;font-size:12.64px;color:#4a4a4a;left:-6px;width:400px;text-align:right;transform-origin:100% 0;transform:scaleX(0.9259);">3.151040</div>
<div class="t" style="top:500.06px;font-size:12.64px;color:#4a4a4a;left:114px;width:400px;text-align:right;transform-origin:100% 0;transform:scaleX(0.9259);">0.00</div>
<div class="t" style="top:521.06px;font-size:12.64px;color:#4a4a4a;left:87px;transform-origin:0 0;transform:scaleX(0.9259);">Total</div>
<div class="t" style="top:521.06px;font-size:12.64px;color:#4a4a4a;left:114px;width:400px;text-align:right;transform-origin:100% 0;transform:scaleX(0.9259);">1,429.13</div>
<div class="t" style="top:236.73px;font-size:15.66px;font-weight:700;color:#a04b1d;left:538.5px;transform-origin:0 0;transform:scaleX(0.9259);">CII Rating</div>
<div class="r" style="left:637px;top:235px;width:90px;height:22px;background:#fefde4;border:1px solid #dcdcdc;width:88px;height:20px;"></div>
<div class="t" style="top:239.96px;font-size:12.64px;color:#4a4a4a;left:382px;width:600px;text-align:center;transform-origin:50% 0;transform:scaleX(0.9259);">E</div>
<svg style="left:538px;top:264px" width="20" height="20" viewBox="538 264 20 20"><path d="M547.4 267.6C545.2 267.6 543.4 269.3 543.4 271.5C543.4 273.3 544.6 274.3 545.3 276.5H549.5C550.2 274.3 551.4 273.3 551.4 271.5C551.4 269.3 549.6 267.6 547.4 267.6Z" fill="#f59233"/><rect x="545.4" y="278" width="4.2" height="1.2" fill="#4a4a4a"/><path d="M545.6 280H549.2L547.4 281.8Z" fill="#4a4a4a"/></svg>
<div class="t" style="top:268.56px;font-size:12.64px;color:#4a4a4a;left:560.8px;transform-origin:0 0;transform:scaleX(0.9259);">Estimated CII Rating of the year calculated based on current voyage only.</div>
<div class="r" style="left:539px;top:288px;width:483px;height:36px;background:#f3f3f3;"></div>
<div class="r" style="left:539px;top:324px;width:49px;height:21px;background:#f3f3f3;"></div>
<div class="r" style="left:588px;top:324px;width:434px;height:21px;background:#fefde4;"></div>
<div class="r" style="left:539px;top:288px;width:484px;height:1px;background:#dcdcdc;"></div>
<div class="r" style="left:539px;top:324px;width:484px;height:1px;background:#dcdcdc;"></div>
<div class="r" style="left:539px;top:345px;width:484px;height:1px;background:#cfcfcf;"></div>
<div class="r" style="left:539px;top:288px;width:1px;height:58px;background:#dcdcdc;"></div>
<div class="r" style="left:588px;top:288px;width:1px;height:58px;background:#dcdcdc;"></div>
<div class="r" style="left:677px;top:288px;width:1px;height:58px;background:#dcdcdc;"></div>
<div class="r" style="left:766px;top:288px;width:1px;height:58px;background:#dcdcdc;"></div>
<div class="r" style="left:855px;top:288px;width:1px;height:58px;background:#dcdcdc;"></div>
<div class="r" style="left:944px;top:288px;width:1px;height:58px;background:#dcdcdc;"></div>
<div class="r" style="left:1022px;top:288px;width:1px;height:58px;background:#dcdcdc;"></div>
<div class="t" style="top:299.96px;font-size:12.64px;color:#4a4a4a;left:263.5px;width:600px;text-align:center;transform-origin:50% 0;transform:scaleX(0.9259);">Year</div>
<div class="t" style="top:292.16px;font-size:12.64px;color:#4a4a4a;left:597px;transform-origin:0 0;transform:scaleX(0.9259);">Sailed</div>
<div class="t" style="top:307.46px;font-size:12.64px;color:#4a4a4a;left:597px;transform-origin:0 0;transform:scaleX(0.9259);">Distance (NM)</div>
<div class="t" style="top:292.16px;font-size:12.64px;color:#4a4a4a;left:686px;transform-origin:0 0;transform:scaleX(0.9259);">CO2</div>
<div class="t" style="top:307.46px;font-size:12.64px;color:#4a4a4a;left:686px;transform-origin:0 0;transform:scaleX(0.9259);">Emission (MT)</div>
<div class="t" style="top:292.16px;font-size:12.64px;color:#4a4a4a;left:510.5px;width:600px;text-align:center;transform-origin:50% 0;transform:scaleX(0.9259);">Attained CII</div>
<div class="t" style="top:307.46px;font-size:12.64px;color:#4a4a4a;left:510.5px;width:600px;text-align:center;transform-origin:50% 0;transform:scaleX(0.9259);">(g/ton mile)</div>
<div class="t" style="top:299.96px;font-size:12.64px;color:#4a4a4a;left:599.5px;width:600px;text-align:center;transform-origin:50% 0;transform:scaleX(0.9259);">Ref. CII</div>
<div class="t" style="top:299.96px;font-size:12.64px;color:#4a4a4a;left:683px;width:600px;text-align:center;transform-origin:50% 0;transform:scaleX(0.9259);">CII Rating</div>
<div class="t" style="top:329.16px;font-size:12.64px;color:#4a4a4a;left:544px;transform-origin:0 0;transform:scaleX(0.9259);">2025</div>
<div class="t" style="top:329.16px;font-size:12.64px;color:#4a4a4a;left:273px;width:400px;text-align:right;transform-origin:100% 0;transform:scaleX(0.9259);">3,548</div>
<div class="t" style="top:329.16px;font-size:12.64px;color:#4a4a4a;left:362px;width:400px;text-align:right;transform-origin:100% 0;transform:scaleX(0.9259);">1,429.13</div>
<div class="t" style="top:329.16px;font-size:12.64px;color:#4a4a4a;left:451px;width:400px;text-align:right;transform-origin:100% 0;transform:scaleX(0.9259);">5.43</div>
<div class="t" style="top:329.16px;font-size:12.64px;color:#4a4a4a;left:540px;width:400px;text-align:right;transform-origin:100% 0;transform:scaleX(0.9259);">4.43</div>
<div class="t" style="top:329.16px;font-size:12.64px;color:#4a4a4a;left:683.5px;width:600px;text-align:center;transform-origin:50% 0;transform:scaleX(0.9259);">E</div>
<div class="t" style="top:358.76px;font-size:12.53px;font-weight:700;color:#333;left:538.7px;transform-origin:0 0;transform:scaleX(0.9259);">Combination with Annual Data</div>
<div class="t" style="top:382.26px;font-size:12.64px;color:#4a4a4a;left:538.7px;transform-origin:0 0;transform:scaleX(0.9259);"><b style="color:#222">1.</b> CII rating before this voyage</div>
<div class="r" style="left:805px;top:378px;width:218px;height:21px;background:#fefde4;border:1px solid #d8d8d8;width:216px;height:19px;"></div>
<div class="t" style="top:382.76px;font-size:12.64px;color:#4a4a4a;left:811px;transform-origin:0 0;transform:scaleX(0.9259);">E (2025)</div>
<div class="t" style="top:405.56px;font-size:12.64px;color:#4a4a4a;left:538.7px;transform-origin:0 0;transform:scaleX(0.9259);"><b style="color:#222">2.</b> CII rating of this voyage</div>
<div class="r" style="left:805px;top:402px;width:218px;height:21px;background:#fefde4;border:1px solid #d8d8d8;width:216px;height:19px;"></div>
<div class="t" style="top:406.26px;font-size:12.64px;color:#4a4a4a;left:811px;transform-origin:0 0;transform:scaleX(0.9259);">E (2025)</div>
<div class="t" style="top:429.46px;font-size:12.64px;color:#4a4a4a;left:538.7px;transform-origin:0 0;transform:scaleX(0.9259);"><b style="color:#222">3. 1 + 2</b> </div>
<div class="r" style="left:805px;top:425px;width:218px;height:21px;background:#fefde4;border:1px solid #d8d8d8;width:216px;height:19px;"></div>
<div class="t" style="top:429.56px;font-size:12.64px;color:#4a4a4a;left:811px;transform-origin:0 0;transform:scaleX(0.9259);">E (2025)</div>
<div class="r" style="left:603px;top:462px;width:426px;height:84px;background:#6f97c9;border:1px solid #111;width:424px;height:82px;"></div>
<div class="t" style="top:478.19px;font-size:23px;color:#111;left:618.3px;transform-origin:0 0;transform-origin:0 0;transform:scaleX(1.045);">Your CII Rating is automatically</div>
<div class="t" style="top:503.19px;font-size:23px;color:#111;left:618.3px;transform-origin:0 0;transform-origin:0 0;transform:scaleX(1.047);">calculated for your review.</div>
<div class="r" style="left:11px;top:189px;width:1042px;height:2px;background:repeating-linear-gradient(90deg,#ff0000 0 6px,transparent 6px 8px);background-position:3px 0"></div>
<div class="r" style="left:11px;top:189px;width:2px;height:368px;background:repeating-linear-gradient(180deg,#ff0000 0 6px,transparent 6px 8px);background-position:0 1px"></div>
<div class="r" style="left:1051px;top:189px;width:2px;height:368px;background:repeating-linear-gradient(180deg,#ff0000 0 6px,transparent 6px 8px);background-position:0 3px"></div>
<div class="r" style="left:11px;top:555px;width:1042px;height:2px;background:repeating-linear-gradient(90deg,#ff0000 0 6px,transparent 6px 8px);background-position:7px 0"></div>
<svg style="left:3px;top:163px" width="39" height="39"><ellipse cx="19" cy="19.4" rx="17.2" ry="17.6" fill="#7ba0cf" stroke="#1d1d1d" stroke-width="1.2"/></svg>
<div class="t" style="top:170.04px;font-size:22.5px;color:#fff;left:-278px;width:600px;text-align:center;transform-origin:50% 0;">2</div>
<div class="r" style="left:2px;top:748px;width:1484px;height:5px;background:#b5b5b5;"></div>
<div class="r" style="left:7px;top:758px;width:74px;height:25px;background:#fafafa;border:1px solid #d5d5d5;width:72px;height:23px;"></div>
<div class="r" style="left:86px;top:758px;width:74px;height:25px;background:#fafafa;border:1px solid #d5d5d5;width:72px;height:23px;"></div>
<svg style="left:18px;top:758px" width="24" height="24" viewBox="18 758 24 24">
<path d="M26.4 766.6V762.8H33.2V766.6" fill="none" stroke="#5a5a5a" stroke-width="1.3"/>
<path d="M23 768.2Q23 766.6 24.6 766.6H34.9Q36.5 766.6 36.5 768.2V773.8H23Z" fill="#555"/>
<rect x="26.6" y="771.3" width="6.6" height="5.2" fill="#fff" stroke="#555" stroke-width="1.2"/>
<path d="M28.2 772.9H31.6M28.2 774.8H31.6" stroke="#555" stroke-width="1"/>
</svg>
<div class="t" style="top:764.26px;font-size:12.64px;color:#4a4a4a;left:43px;transform-origin:0 0;transform:scaleX(0.9259);">Print</div>
<svg style="left:95px;top:758px" width="24" height="24" viewBox="95 758 24 24">
<path d="M100.5 764.7L106.3 768L113.3 763.7" fill="none" stroke="#66bb6a" stroke-width="1.3"/><circle cx="100.5" cy="764.7" r="1.6" fill="#66bb6a"/><circle cx="113.3" cy="763.7" r="1.6" fill="#66bb6a"/><circle cx="106.3" cy="767.6" r="1.4" fill="#66bb6a"/>
<path d="M100.5 769.6L106.3 771.4L113.3 769.6" fill="none" stroke="#4a90d9" stroke-width="1.3"/><circle cx="100.5" cy="769.6" r="1.6" fill="#4a90d9"/><circle cx="113.3" cy="769.6" r="1.6" fill="#4a90d9"/><circle cx="106.3" cy="771.4" r="1.6" fill="#4a90d9"/>
<path d="M100.3 775.3L106.3 775L113.3 776.4" fill="none" stroke="#666" stroke-width="1.1"/><circle cx="100.3" cy="775.3" r="1.5" fill="#666"/><circle cx="106.3" cy="775" r="1.5" fill="#666"/><circle cx="113.3" cy="776.4" r="1.5" fill="#666"/></svg>
<div class="t" style="top:764.26px;font-size:12.64px;color:#4a4a4a;left:120px;transform-origin:0 0;transform:scaleX(0.9259);">Index</div>
<div class="t" style="top:765.85px;font-size:11.66px;color:#222;left:180px;transform-origin:0 0;transform:scaleX(0.9259);">Reset</div>
<div class="r" style="left:223px;top:769px;width:8px;height:2px;background:#333;"></div>
<div class="r" style="left:236px;top:769px;width:115px;height:2px;background:#dcdcdc;"></div>
<div class="r" style="left:258px;top:765px;width:5px;height:11px;background:#444;"></div>
<div class="r" style="left:355px;top:769px;width:9px;height:2px;background:#333;"></div>
<div class="r" style="left:358.5px;top:766px;width:2px;height:8px;background:#333;"></div>
<div class="t" style="top:763.96px;font-size:12.64px;color:#4a4a4a;left:381px;transform-origin:0 0;transform:scaleX(0.9259);">100 %</div>
<div class="r" style="left:1342px;top:758px;width:74px;height:25px;background:#fafafa;border:1px solid #d5d5d5;width:72px;height:23px;"></div>
<div class="r" style="left:1421px;top:758px;width:74px;height:25px;background:#fafafa;border:1px solid #d5d5d5;width:72px;height:23px;"></div>
<div class="t" style="top:763.96px;font-size:12.64px;color:#4a4a4a;left:1079px;width:600px;text-align:center;transform-origin:50% 0;transform:scaleX(0.9259);">OK</div>
<div class="t" style="top:763.96px;font-size:12.64px;color:#4a4a4a;left:1158px;width:600px;text-align:center;transform-origin:50% 0;transform:scaleX(0.9259);">Cancel</div>
<div class="r" style="left:1498px;top:780px;width:1px;height:1px;background:#6a6a6a;"></div>
<div class="r" style="left:1496px;top:782px;width:1px;height:1px;background:#6a6a6a;"></div>
<div class="r" style="left:1498px;top:782px;width:1px;height:1px;background:#6a6a6a;"></div>
<div class="r" style="left:1494px;top:784px;width:1px;height:1px;background:#6a6a6a;"></div>
<div class="r" style="left:1496px;top:784px;width:1px;height:1px;background:#6a6a6a;"></div>
<div class="r" style="left:1498px;top:784px;width:1px;height:1px;background:#6a6a6a;"></div>
<div class="r" style="left:1492px;top:786px;width:1px;height:1px;background:#6a6a6a;"></div>
<div class="r" style="left:1494px;top:786px;width:1px;height:1px;background:#6a6a6a;"></div>
<div class="r" style="left:1496px;top:786px;width:1px;height:1px;background:#6a6a6a;"></div>
<div class="r" style="left:1498px;top:786px;width:1px;height:1px;background:#6a6a6a;"></div>
</body></html>
